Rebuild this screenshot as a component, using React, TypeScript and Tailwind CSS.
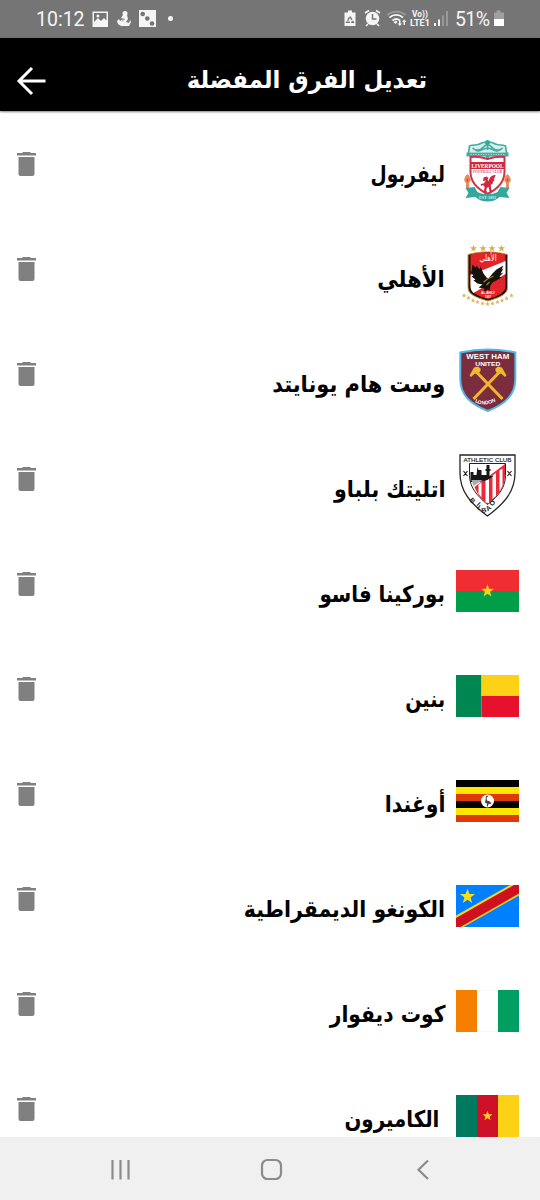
import type { ReactNode } from "react";

const STAR = "M0-10 2.36-3.24 9.51-3.09 3.82 1.24 5.88 8.09 0 4-5.88 8.09-3.82 1.24-9.51-3.09-2.36-3.24Z";

function Star({ x, y, r, fill }: { x: number; y: number; r: number; fill: string }) {
  return <path d={STAR} fill={fill} transform={`translate(${x} ${y}) scale(${r / 10})`} />;
}

function Flag({ children }: { children: ReactNode }) {
  return (
    <svg viewBox="0 0 63 42" className="block h-[42px] w-[63px]">
      {children}
    </svg>
  );
}

function Crest({ children }: { children: ReactNode }) {
  return (
    <svg viewBox="0.5 0 64 64" className="block h-16 w-16 shrink-0 overflow-visible">
      {children}
    </svg>
  );
}

function Liverpool() {
  return (
    <Crest>
      <path d="M14 13c0-5 2-7 6-6 3 1 4-1 6-3 3-1 9-1 12 0 2 2 3 4 6 3 4-1 6 1 6 6Z" fill="#d5eeea" />
      <g fill="none" stroke="#45aaa1" strokeWidth="1.7">
        <path d="M13 14 14 7c4-2 7 0 10-2 3-2 4-2 8-2s5 0 8 2c3 2 6 0 10 2l1 7" />
        <path d="M17 9c4 4 8 2 11-1 2-3 6-3 8 0 3 3 7 5 11 1M32 2V11M20 11c5 3 7-2 12-2s7 5 12 2" />
      </g>
      <circle cx="32" cy="3.500" r="2.500" fill="#35a79c" />
      <path d="M11 13.500h42v4H34l-2 3-2-3H11z" fill="#45aaa1" />
      <path d="M15 15.500h34" stroke="#9bd4cd" strokeWidth="1" strokeDasharray="1.5 1" />
      <path d="M15 18c6-1 11 0 17 2 6-2 11-3 17-2v15c0 10-7 17-17 22-10-5-17-12-17-22Z" fill="#fff" stroke="#ce3348" strokeWidth="2" />
      <path d="M15 23h34v7H15z" fill="#ce2940" />
      <text x="32" y="28.900" textAnchor="middle" fontFamily="Liberation Serif" fontWeight="bold" fontSize="7" textLength="32" lengthAdjust="spacingAndGlyphs" fill="#fff">LIVERPOOL</text>
      <text x="32" y="34" textAnchor="middle" fontFamily="Liberation Serif" fontWeight="bold" fontSize="4" textLength="29" lengthAdjust="spacingAndGlyphs" fill="#d8485b">FOOTBALL CLUB</text>
      <path d="M28 38.500l3-1 2 1.500-1 2 1.200 1c1-4 3-6 7-6-1 2-1 3-2 4l1 1-2 2 .5 1-2.500 2 .7 5 1.800 2h-3.500l-1-5-2 1-.5 3 1.500 1.500h-4l1-5.500-1.500-2-2 1-.5-2 3-.5 2.300-3-3 .5Z" fill="#ce2940" />
      <path d="M12 35c-4 4-4 7-1.500 9v6h3v-6c2.500-2 2.500-5-1.500-9ZM52 35c-4 4-4 7-1.500 9v6h3v-6c2.500-2 2.500-5-1.500-9Z" fill="#eb8a5b" />
      <path d="M12 39c-1 1-1.500 3 0 4 1.500-1 1-3 0-4ZM52 39c-1 1-1.500 3 0 4 1.500-1 1-3 0-4Z" fill="#d64b38" />
      <path d="M10 49l9-1 3 5c6 3 14 3 20 0l3-5 9 1-3 5 3 5-10-1c-6 6-18 6-24 0l-10 1 3-5Z" fill="#35a79c" />
      <text x="32" y="60" textAnchor="middle" fontFamily="Liberation Serif" fontWeight="bold" fontSize="5" textLength="17" lengthAdjust="spacingAndGlyphs" fill="#d3efeb">EST·1892</text>
    </Crest>
  );
}

const AHLY_STARS = [[8.5, 51.5], [13, 54], [17.5, 56.5], [22, 58], [27, 59.5], [32, 60], [37, 59.5], [42, 58], [46.5, 56.5], [51, 54.5], [56, 51.5]];

function Ahly() {
  return (
    <Crest>
      {[18, 27.5, 36.5, 46].map((x) => <Star key={x} x={x} y={4.5} r={3.8} fill="#e0ae43" />)}
      {AHLY_STARS.map(([x, y]) => <Star key={x} x={x} y={y} r={2.5} fill="#dfb157" />)}
      <path d="M12.500 10.500c13-3.500 26-3.500 39.500 0v33c0 7-8 10-19.500 13.500C20.500 53.500 12.500 50.500 12.500 43.500Z" fill="#171310" stroke="#c99b38" strokeWidth="1" />
      <path d="M15 10.500c11-3 24-3 35 0v32c0 6-7 9.500-17.500 12.500-10.500-3-17.500-6.500-17.500-12.500Z" fill="#e2232a" />
      <path d="M15 31 50 17v13L18 49c-2-2-3-4-3-7Z" fill="#fff" />
      <text x="32.500" y="17" textAnchor="middle" fontFamily="DejaVu Sans" fontSize="9" textLength="17" lengthAdjust="spacingAndGlyphs" fill="#fff">الأهلي</text>
      <path d="M17 20.500l3 3 1-2 3 4 1-3 3 7 3 4 2 1 4-5 4-4 7-4-2 4 2-1-3 5 3-1-4 4 2 1-5 3-4 2-2 3-1 4 2 2-4-2-4 3 1-4-6-1 4-3-5-1-4-3 2-1-4-3 2-1-4-4 2 0Z" fill="#16130f" />
      <path d="M28 38l4-3 6-3M31 41l3-3" stroke="#a77b28" strokeWidth="1.200" fill="none" />
      <text x="32.500" y="50" textAnchor="middle" fontFamily="Liberation Sans" fontWeight="bold" fontSize="3.300" fill="#fff">AL AHLY</text>
      <text x="32.500" y="53.500" textAnchor="middle" fontFamily="Liberation Sans" fontWeight="bold" fontSize="2.800" fill="#fff">1907</text>
    </Crest>
  );
}

function WestHam() {
  return (
    <Crest>
      <path d="M4.800 3.500C22-.2 43-.2 59.800 3.500V30c0 16-10 25-27.500 32C14.800 55 4.800 46 4.800 30Z" fill="#7b2c3f" stroke="#50b8e7" strokeWidth="2" />
      <text x="32.300" y="10" textAnchor="middle" fontFamily="Liberation Sans" fontWeight="bold" fontSize="8" textLength="43" lengthAdjust="spacingAndGlyphs" fill="#fff">WEST HAM</text>
      <text x="32.300" y="16.500" textAnchor="middle" fontFamily="Liberation Sans" fontWeight="bold" fontSize="5" textLength="25" lengthAdjust="spacingAndGlyphs" fill="#fff">UNITED</text>
      <path d="M20 22 47 50M45 22 18 50" fill="none" stroke="#f2b82d" strokeWidth="3" />
      <path d="M14 26.500l1.500 1.500 4-3.500 3 1 2.500-3.500v-2.500l-2.500-2-4 1ZM51 26.500l-1.500 1.500-4-3.500-3 1-2.500-3.500v-2.500l2.500-2 4 1Z" fill="#f2b82d" />
      <text x="22.500 25.600 29.500 33.200 36.900 40.300" y="53.300 54.500 55.300 55.300 54.800 53.600" rotate="18 12 5 -3 -10 -18" fontFamily="Liberation Sans" fontWeight="bold" fontSize="5" fill="#fff">LONDON</text>
    </Crest>
  );
}

function Athletic() {
  return (
    <Crest>
      <path d="M4.500 1h55v18c0 18-10 30-27.500 43C14.500 49 4.500 37 4.500 19Z" fill="#fff" stroke="#242426" strokeWidth="1.300" />
      <text x="32" y="7.700" textAnchor="middle" fontFamily="Liberation Sans" fontSize="5.800" textLength="48" lengthAdjust="spacingAndGlyphs" fill="#222" stroke="#222" strokeWidth=".15">ATHLETIC CLUB</text>
      <path d="M14 9.500h36v12c0 11-6 20-18 29-11-9-18-18-18-29Z" fill="#fff" stroke="#222" strokeWidth="1" />
      <path d="M49.500 10v11.500c0 11-6 20-17.500 29-6-5-10-10-13-17.500Z" fill="#ed2938" />
      <path d="M23 30.500l3-2v15l-3-4M30 26l3.500-2.500v25.500l-3.500-.5ZM37 21.500l3.500-2.500v23l-3.500 3ZM44 16.500l3-2v17l-3 6Z" fill="#fff" />
      <path d="M15 18h3v3h3l1-8 1 3h3v5h5v-4l-2-1 2-1v-4h3v4l2 1-2 1v5h4l-6 4-8 2H15Z" fill="#171719" />
      <path d="M16 26h11l-9 6Z" fill="#aaa" />
      <path d="m8 17 4 5m0-5-4 5M52 17l4 5m0-5-4 5" stroke="#222" strokeWidth="1.200" />
      <text x="18.500 22.600 25.500 31.300 37.300 42.300" y="46.300 51 54.800 59 57.600 52.600" rotate="50 45 32 -12 -35 -52" fontFamily="Liberation Sans" fontWeight="bold" fontSize="6.800" fill="#222">BILBAO</text>
    </Crest>
  );
}

function Burkina() {
  return (
    <Flag>
      <path d="M0 0h63v21H0z" fill="#f02d33" />
      <path d="M0 21h63v21H0z" fill="#009e49" />
      <Star x={31.5} y={21} r={6.7} fill="#fcd116" />
    </Flag>
  );
}

function Benin() {
  return (
    <Flag>
      <path d="M0 0h25.500v42H0z" fill="#008751" />
      <path d="M25.500 0H63v21H25.500z" fill="#fcd116" />
      <path d="M25.500 21H63v21H25.500z" fill="#e8112d" />
    </Flag>
  );
}

function Uganda() {
  return (
    <Flag>
      <path d="M0 0h63v42H0z" fill="#000" />
      <path d="M0 7h63v7H0zM0 28h63v7H0z" fill="#ffe600" />
      <path d="M0 14h63v7H0zM0 35h63v7H0z" fill="#de3908" />
      <circle cx="31.500" cy="21" r="6.500" fill="#fff" />
      <path d="m29.500 20 .5-4 1.500-.5.5 1-1.500 1 .5 3 3 1 1 2.500-2-.5-1 2v1h-1v-3l-2-1Z" fill="#444" />
      <path d="m33 22 2.500 1-1.500 1.500Z" fill="#d90000" />
    </Flag>
  );
}

function Congo() {
  return (
    <Flag>
      <path d="M0 0h63v42H0z" fill="#007fff" />
      <path d="M0 30.500 54 0h9v10.500L7.500 42H0Z" fill="#f7d618" />
      <path d="M0 33 58 0h5v8.500L4.500 42H0Z" fill="#ce1021" />
      <Star x={11.5} y={11.5} r={8} fill="#f7e017" />
    </Flag>
  );
}

function Ivory() {
  return (
    <Flag>
      <path d="M0 0h63v42H0z" fill="#f0f0f0" />
      <path d="M21 .5h21v41H21z" fill="#fff" />
      <path d="M0 0h21v42H0z" fill="#f77f00" />
      <path d="M42 0h21v42H42z" fill="#009e60" />
    </Flag>
  );
}

function Cameroon() {
  return (
    <Flag>
      <path d="M0 0h21v42H0z" fill="#007a5e" />
      <path d="M21 0h21v42H21z" fill="#ce1126" />
      <path d="M42 0h21v42H42z" fill="#fcd116" />
      <Star x={31.5} y={21} r={5.3} fill="#fcd116" />
    </Flag>
  );
}

const TEAMS = [
  { name: "ليفربول", emblem: <Liverpool />, fit: "mr-[11px] scale-x-[0.81]" },
  { name: "الأهلي", emblem: <Ahly />, fit: "mr-[11px] scale-x-[0.915]" },
  { name: "وست هام يونايتد", emblem: <WestHam />, fit: "mr-[11px] scale-x-[0.91]" },
  { name: "اتليتك بلباو", emblem: <Athletic />, fit: "mr-[11px] scale-x-[0.895]" },
  { name: "بوركينا فاسو", emblem: <Burkina />, fit: "mr-[11px] scale-x-[0.86]" },
  { name: "بنين", emblem: <Benin />, fit: "mr-[11px] scale-x-[0.83]" },
  { name: "أوغندا", emblem: <Uganda />, fit: "mr-[11px] scale-x-[0.885]" },
  { name: "الكونغو الديمقراطية", emblem: <Congo />, fit: "mr-[11px] scale-x-[0.89]" },
  { name: "كوت ديفوار", emblem: <Ivory />, fit: "mr-[11px] scale-x-[0.88]" },
  { name: "الكاميرون", emblem: <Cameroon />, fit: "mr-[17px] scale-x-[0.86]" },
];

function StatusBar() {
  return (
    <div className="flex h-[38px] shrink-0 items-center bg-[#757575] font-[Roboto] text-[#f5f5f5]">
      <span className="mt-0.5 ml-9 w-[49px] text-[19.5px] leading-none">10:12</span>
      <svg viewBox="85 0 95 38" className="h-[38px] w-[95px]" fill="#f5f5f5">
        <path fillRule="evenodd" d="M92.500 11.500h15.500v15.500H92.500ZM94 13v9l4-4 3 3 3-3 2.500 2.500V13ZM98 14.500a1.500 1.500 0 1 1-.1 3 1.500 1.500 0 0 1 .1-3Z" />
        <circle cx="125" cy="13.500" r="2.500" />
        <path d="M123 15h4l1 4-2 3 3 1 1-3 1 2-2 4h-8l-3-2-1-3 2-2 1 2 3-2-2-1Z" />
        <path d="m121.500 19 3 0-2.500 2.500" fill="none" stroke="#757575" strokeWidth=".8" />
        <path d="M139 10h17v17h-17z" />
        <g fill="#757575"><circle cx="142.700" cy="14" r="2.300" /><circle cx="147.300" cy="18.500" r="2.300" /><circle cx="152" cy="23.500" r="2.300" /></g>
        <circle cx="170.500" cy="18.500" r="2.500" />
      </svg>
      <div className="grow" />
      <svg viewBox="341 0 110 38" className="mr-[5px] h-[38px] w-[110px]" fill="#f5f5f5">
        <path d="M348 10.500h4v2h3.500v13.500h-11V12.500h3.500Z" />
        <path d="m350 16.500 3.300 5.700h-6.600Z" fill="none" stroke="#757575" strokeWidth="1.400" strokeDasharray="3.800 1.200" />
        <circle cx="372.500" cy="18.500" r="6.800" />
        <path d="m365 13 4-2.500m11 2.500-4-2.500M368 24l-2 2m11-2 2 2" stroke="#f5f5f5" strokeWidth="1.700" />
        <path d="M372.500 14v5h4" stroke="#757575" strokeWidth="1.500" fill="none" />
        <g fill="none" strokeWidth="1.700">
          <path d="M387.500 15c5-4.500 13-4.500 18 0" stroke="#9c9c9c" />
          <path d="M389.500 17.500c4-3.500 9.500-3.500 13.500 0M392.500 20.500c2.500-2 5-2 7.500 0" stroke="#f5f5f5" />
        </g>
        <path d="m393.500 22 2.500-1.500 1.500 1.500-2 2ZM399 20.500h1.500v3h1.500l-2.250 2.500-2.250-2.500h1.500ZM403.500 25v-3H402l2.250-2.500 2.250 2.500H405v3Z" />
        <text x="412" y="17" fontFamily="Roboto" fontWeight="700" fontSize="8.300" textLength="16">Vo))</text>
        <text x="410" y="26" fontFamily="Roboto" fontWeight="700" fontSize="9" textLength="20" lengthAdjust="spacingAndGlyphs">LTE1</text>
        <path d="M434 23h2v3h-2zM438 19.500h2V26h-2z" />
        <path d="M442 15.500h2V26h-2zM446 11h2v15h-2z" fill="#999" />
      </svg>
      <span className="-ml-px mt-0.5 w-[38px] text-[19.5px] leading-none tracking-[-0.6px]">51%</span>
      <svg viewBox="0 0 12 38" className="mr-[35px] h-[38px] w-3">
        <path d="M3.500 10.500h4v2H11V19H1v-6.500h2.500Z" fill="#a0a0a0" />
        <path d="M1 19h10v7H1Z" fill="#fff" />
      </svg>
    </div>
  );
}

export default function App() {
  return (
    <div className="flex h-[1200px] w-[540px] flex-col overflow-hidden bg-white font-['DejaVu_Sans',sans-serif]">
      <StatusBar />
      <header className="z-10 flex h-[73px] shrink-0 items-center justify-between bg-black pt-2 pr-[113px] pl-4 shadow-[0_1px_2px_rgba(0,0,0,0.5)]">
        <svg viewBox="0 0 30 30" className="mt-1 h-[30px] w-[30px]" fill="none" stroke="#fff" strokeWidth="3">
          <path d="M16 2 3 15l13 13M3 15h26.500" />
        </svg>
        <h1 dir="rtl" className="mt-0.5 origin-right scale-x-[0.95] text-[24px] font-bold whitespace-nowrap text-white">تعديل الفرق المفضلة</h1>
      </header>
      <main className="min-h-0 grow overflow-hidden pt-[7px]">
        {TEAMS.map((team) => (
          <div key={team.name} className="flex h-[105px] items-center justify-between pr-[21px] pl-[17px]">
            <svg viewBox="0 0 19 24" className="mb-3.5 h-6 w-[19px]" fill="#808080">
              <path d="M0 1h5l1-1h7l1 1h5v2.500H0ZM1.500 5h16v17q0 2-2 2h-12q-2 0-2-2Z" />
            </svg>
            <div dir="rtl" className="flex items-center">
              <div className="flex w-[63px] justify-center">{team.emblem}</div>
              <div className={`mt-2 origin-right text-[23px] font-bold whitespace-nowrap text-black ${team.fit}`}>{team.name}</div>
            </div>
          </div>
        ))}
      </main>
      <nav className="h-[63px] shrink-0 bg-[#f0f0f0]">
        <svg viewBox="0 0 540 63" className="h-[63px] w-[540px]" fill="none" stroke="#8b8b8b" strokeWidth="2.200">
          <path d="M112.500 23v19.500M120.500 23v19.500M128.500 23v19.500" />
          <rect x="262" y="23" width="19" height="19" rx="5.500" />
          <path d="m428 23.500-9.500 9.300 9.500 9.200" />
        </svg>
      </nav>
    </div>
  );
}
